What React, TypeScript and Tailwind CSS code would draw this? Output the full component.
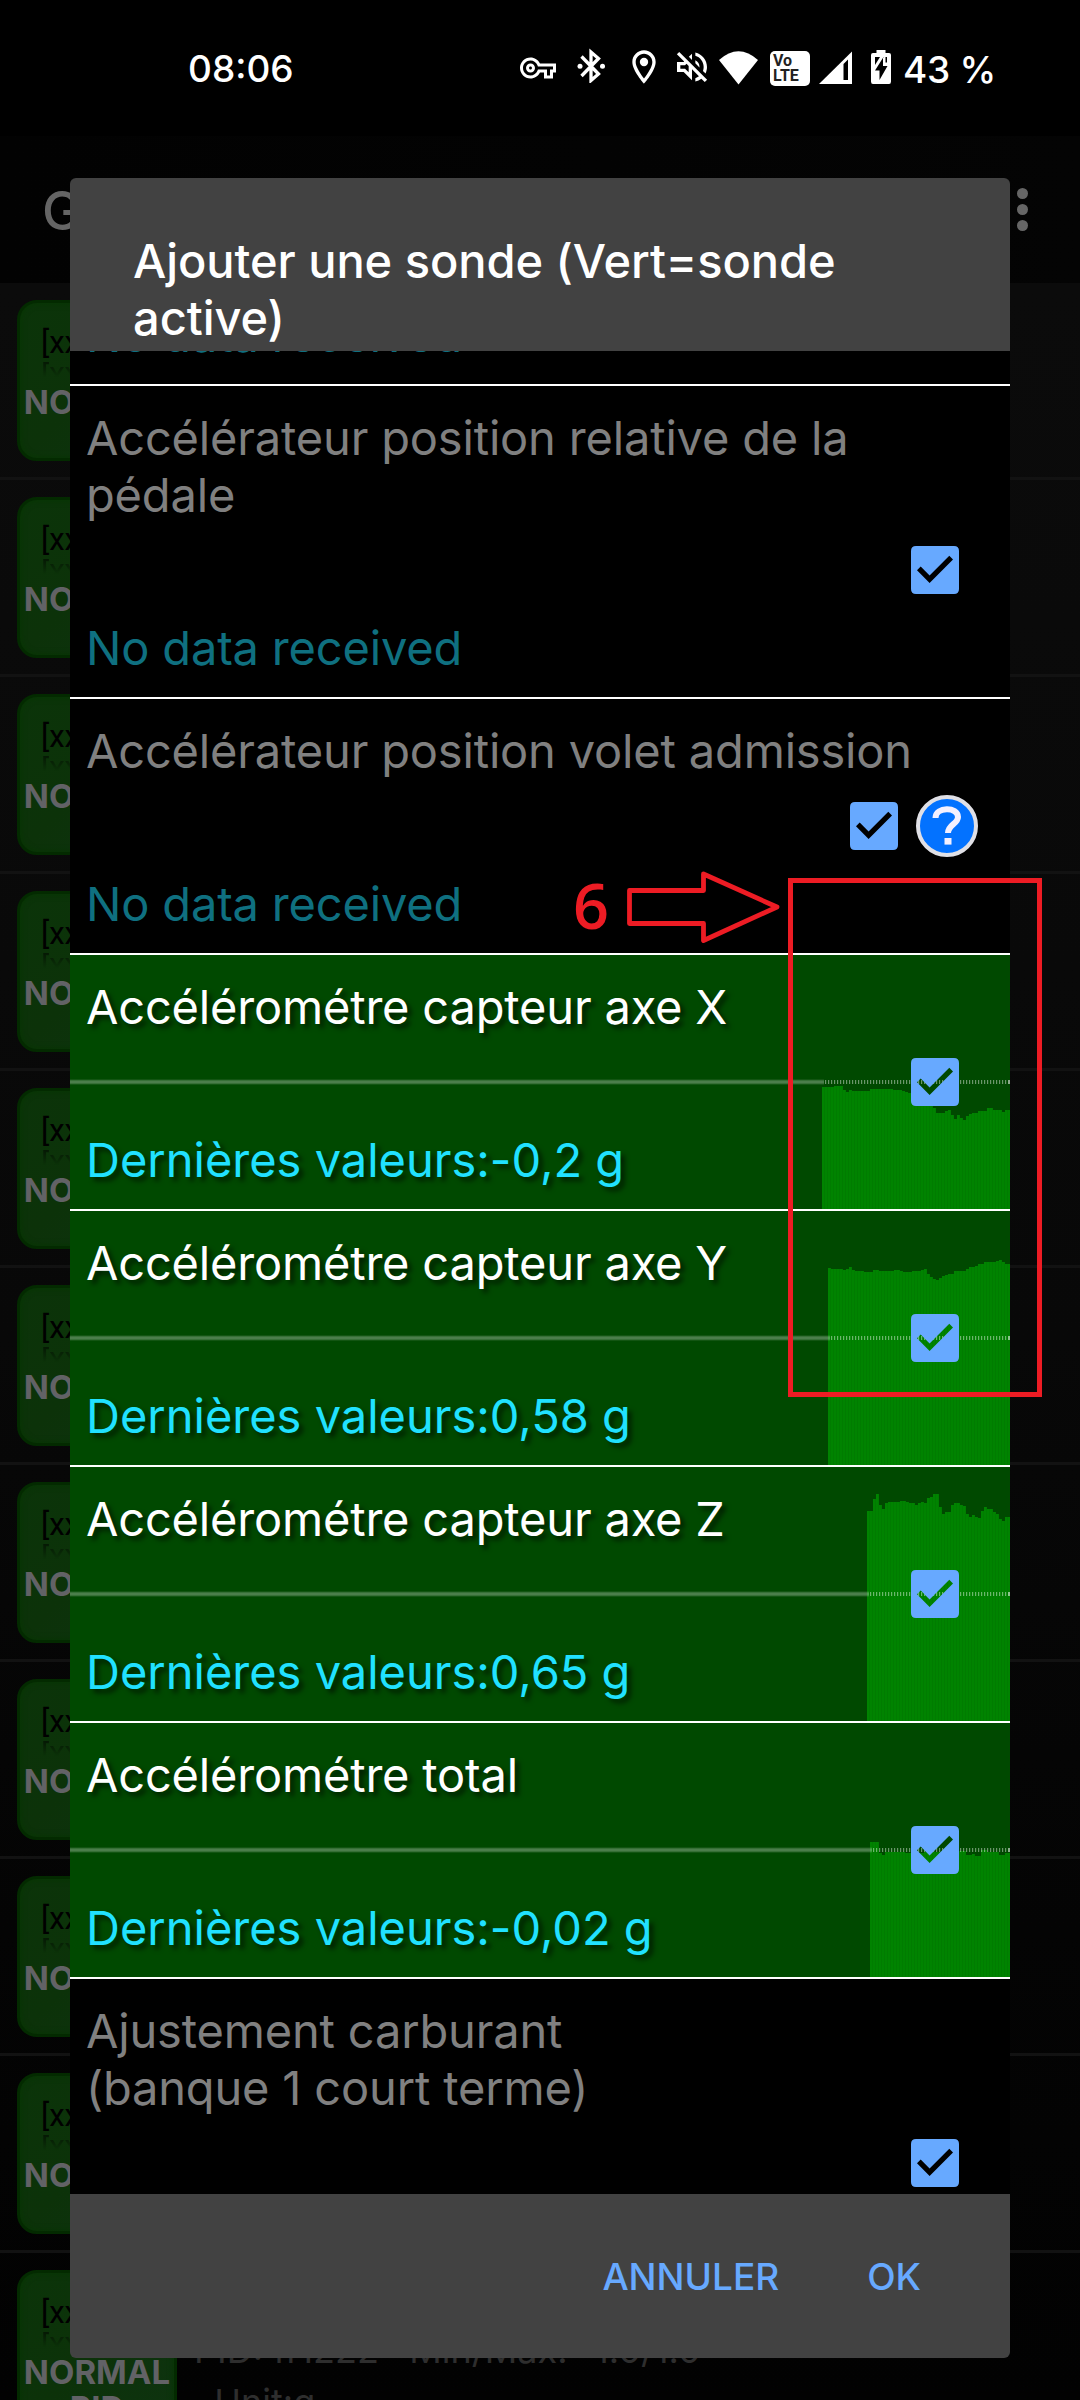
import React from "react";
import { MdOutlineLocationOn, MdOutlineVolumeOff, MdOutlineVpnKey } from "react-icons/md";

type Step = [number, number];

const axisX: Step[] = [
  [752, 132], [764, 131], [773, 134.5], [776, 137], [779, 134.5], [782, 136], [800, 133.5], [823, 134.5],
  [832, 136], [835, 137], [838, 138], [845, 141], [854, 146], [863, 152.5], [866, 157.5], [875, 156],
  [878, 154.5], [881, 160], [884, 164], [887, 160], [890, 163], [893, 165], [896, 161], [899, 159],
  [902, 158], [908, 156], [917, 153], [923, 154.5], [932, 157], [935, 155],
];
const axisY: Step[] = [
  [758, 56.7], [761, 57.7], [773, 58.7], [776, 57.7], [779, 56.3], [782, 58.7], [785, 60], [794, 61.3],
  [803, 59], [809, 60.3], [824, 59], [830, 60.3], [833, 61.3], [842, 60.3], [851, 58.7], [854, 57.7],
  [857, 63.3], [860, 66.3], [863, 67.7], [866, 69.3], [869, 67], [872, 65.3], [875, 64.3], [878, 62.7],
  [881, 63.3], [884, 60.3], [896, 57.7], [899, 56.3], [905, 54.7], [908, 52.7], [914, 51.3], [926, 50.3],
  [929, 48.7], [932, 51.3], [935, 52.7],
];
const axisZ: Step[] = [
  [797, 44], [803, 32], [806, 27.3], [809, 37.7], [812, 42.3], [815, 36.3], [818, 35], [830, 33.7],
  [836, 35], [839, 36.3], [845, 37.7], [848, 36.3], [851, 35], [854, 36.3], [857, 31.3], [860, 30],
  [863, 27.3], [869, 40.3], [872, 46.7], [875, 45.3], [881, 37.7], [884, 36.3], [890, 37.7], [893, 39.3],
  [896, 46.7], [899, 49.7], [902, 48.3], [905, 49.7], [908, 51.3], [911, 44], [914, 40.3], [917, 42.3],
  [923, 44.7], [926, 46.7], [929, 52], [932, 54.3], [935, 49.7],
];
const total: Step[] = [
  [800, 119.3], [809, 129.7], [812, 132.3], [815, 129.3], [835, 130], [854, 128.5], [889, 128.3],
  [896, 132.3], [902, 131], [905, 133], [911, 127], [917, 128.7], [929, 131.7], [935, 129.7],
];

function stepPath(steps: Step[]) {
  let d = `M${steps[0][0]} 254`;
  steps.forEach(([, y], i) => {
    d += `V${y}H${i + 1 < steps.length ? steps[i + 1][0] : 940}`;
  });
  return d + "V254Z";
}

function History({ steps, id }: { steps: Step[]; id: string }) {
  const start = steps[0][0];
  return (
    <svg className="absolute inset-0 h-full w-full" viewBox="0 0 940 254">
      <defs>
        <pattern id={id} x={start} y="0" width="3" height="254" patternUnits="userSpaceOnUse">
          <rect width="3" height="254" fill="#008300" />
          <rect x="2" width="1" height="254" fill="#007c00" />
        </pattern>
      </defs>
      <path d={stepPath(steps)} fill={`url(#${id})`} shapeRendering="crispEdges" />
      <path d={`M0 127H${start + 2}`} stroke="#fff" strokeOpacity=".14" strokeWidth="5" />
      <path d={`M0 127H${start + 2}`} stroke="#fff" strokeOpacity=".18" strokeWidth="3" />
      <path d={`M${start + 3} 127H938`} stroke="#fff" strokeOpacity=".42" strokeWidth="4" strokeDasharray="1.2 1.8" />
      <path d="M938 127H940" stroke="#fff" strokeOpacity=".55" strokeWidth="4" />
    </svg>
  );
}

function Checkbox() {
  return (
    <svg className="h-12 w-12 shrink-0" viewBox="0 0 48 48">
      <path
        fillRule="evenodd"
        fill="#67a9ff"
        d="M5 0H43Q48 0 48 5V43Q48 48 43 48H5Q0 48 0 43V5Q0 0 5 0ZM18.6 37L42 13.4L38.3 9.7L18.6 29.4L9.7 20.5L6 24.2Z"
      />
    </svg>
  );
}

function Help() {
  return (
    <div className="flex h-[62px] w-[62px] items-center justify-center rounded-full border-4 border-[#e0e0e6] bg-[#0372ff]">
      <svg className="h-[42px] w-[32px]" viewBox="0 0 32 42" fill="none" stroke="#f4f0ff" strokeWidth="6">
        <path d="M4.5 13C4.5 1.500 27 1.500 27 12C27 19 17 19.500 17 28" />
        <path d="M13.500 36.300H20.500" strokeWidth="6.600" />
      </svg>
    </div>
  );
}

interface RowProps {
  title: React.ReactNode;
  value?: string;
  help?: boolean;
  steps?: Step[];
  id?: string;
}

function ProbeRow({ title, value, help, steps, id = "" }: RowProps) {
  const active = Boolean(steps);
  return (
    <div
      className={
        active
          ? "relative shrink-0 border-b-2 border-white bg-[#004900] pt-[23px] pb-[21px] [text-shadow:4px_4px_5px_rgba(0,0,0,0.6)]"
          : "relative shrink-0 border-b-2 border-white bg-black pt-[23px] pb-[21px]"
      }
    >
      {steps && <History steps={steps} id={id} />}
      <div className={active ? "relative pl-4 tracking-[-0.18px] text-white" : "relative pl-4 tracking-[-0.17px] text-[#808080]"}>
        {title}
      </div>
      <div
        className={
          help
            ? "relative flex h-24 items-start justify-end gap-[18px] pt-[23px] pr-[32px]"
            : "relative flex h-24 items-start justify-end pt-[23px] pr-[51px]"
        }
      >
        <Checkbox />
        {help && (
          <div className="-mt-[7px]">
            <Help />
          </div>
        )}
      </div>
      {value ? (
        <div className="relative pl-4 text-[#21e1ff]">{value}</div>
      ) : (
        <div className="relative pl-4 tracking-[-0.17px] text-[#0f7080]">No data received</div>
      )}
    </div>
  );
}

function PidButton() {
  return (
    <div className="flex h-[197px] shrink-0 items-start border-b-[3px] border-[#121212] pt-[17px] pl-[17px]">
      <div className="h-[161px] w-[160px] overflow-hidden rounded-[20px] border-[3px] border-[#032a00] bg-linear-to-br from-[#0b3409] via-[#0c3209] to-[#0e3310] pt-[21px] shadow-[inset_0_0_6px_#063700]">
        <div className="pl-[21px] font-[Roboto] text-[31px] leading-[38px] text-black">[xxx]</div>
        <div className="-mt-px h-[16px] overflow-hidden pl-[21px] font-[Roboto] text-[31px] leading-[38px] text-black opacity-55 [mask-image:linear-gradient(to_bottom,black,transparent)]">
          <div className="-mt-[3px] -scale-y-100">[xxx]</div>
        </div>
        <div className="mt-[7px] text-center text-[33px] leading-[36px] font-bold text-[#626266]">
          NORMAL
          <br />
          PID
        </div>
      </div>
    </div>
  );
}

function StatusBar() {
  return (
    <div className="flex h-[136px] items-start bg-black pt-[47px] text-[37px] leading-[42px] font-medium text-white">
      <div className="mt-px ml-[188px] w-[332px] shrink-0">08:06</div>
      <MdOutlineVpnKey className="mt-[3px] h-[36px] w-[36px] shrink-0" />
      <svg className="ml-[20px] h-[36px] w-[30px] shrink-0" viewBox="0 0 30 36" fill="none" stroke="white" strokeWidth="3.300">
        <path d="M5.500 9.500L22.500 27L15 33.500V5L22.500 11.500L5.500 29" />
        <circle cx="4" cy="19.300" r="2.500" fill="white" stroke="none" />
        <circle cx="26.500" cy="19.300" r="2.500" fill="white" stroke="none" />
      </svg>
      <MdOutlineLocationOn className="ml-[18px] h-10 w-10 shrink-0" />
      <MdOutlineVolumeOff className="ml-[8px] h-10 w-10 shrink-0" />
      <svg className="ml-[7px] h-[42px] w-[39px] shrink-0" viewBox="0 0 39 42" fill="white">
        <path d="M0 13Q19.500 -4.500 39 13L19.500 37.500Z" />
      </svg>
      <div className="mt-[3.500px] ml-[12px] h-[35px] w-[40px] shrink-0 rounded-[5px] bg-white pt-[2px] pl-[3px] font-[Roboto] text-[16px] leading-[15px] font-bold text-[#222]">
        Vo
        <br />
        LTE
      </div>
      <svg className="ml-[9px] h-[42px] w-[34px] shrink-0" viewBox="0 0 34 42">
        <path d="M0 37L33 4.500V37Z" fill="white" />
        <path d="M24.500 17L29 12.500V33H24.500Z" fill="black" />
      </svg>
      <svg className="ml-[18px] h-[42px] w-[20px] shrink-0" viewBox="0 0 20 42">
        <path d="M5.500 3H14.500V6H18Q20 6 20 8V34.500Q20 37 18 37H2Q0 37 0 34.500V8Q0 6 2 6H5.500Z" fill="white" />
        <path d="M12.500 10L4 23.500H8.500V33L16.500 19H12V10Z" fill="black" />
        <path d="M4 10H9L4 18ZM14.500 10H16V15.500H14.500Z" fill="black" />
      </svg>
      <div className="mt-[2px] ml-[12px] tracking-[-0.300px] whitespace-nowrap">43 %</div>
    </div>
  );
}

function Dialog() {
  return (
    <div className="absolute top-[178px] left-[70px] flex h-[2180px] w-[940px] flex-col overflow-hidden rounded-[6px] bg-[#424242] text-[47px] leading-[57px]">
      <div className="h-[173px] shrink-0 pt-[54px] pl-[63px] font-medium tracking-[-0.060px] text-white">
        Ajouter une sonde (Vert=sonde
        <br />
        active)
      </div>
      <div className="flex h-[1843px] shrink-0 flex-col overflow-hidden bg-black">
        <div className="flex h-[35px] shrink-0 flex-col justify-end overflow-hidden border-b-2 border-white pb-[21px] pl-4 tracking-[-0.17px] text-[#0f7080]">
          <div className="-mt-[60px]">No data received</div>
        </div>
        <ProbeRow title={<>Accélérateur position relative de la<br />pédale</>} />
        <ProbeRow title="Accélérateur position volet admission" help />
        <ProbeRow title="Accélérométre capteur axe X" value="Dernières valeurs:-0,2 g" steps={axisX} id="bars-x" />
        <ProbeRow title="Accélérométre capteur axe Y" value="Dernières valeurs:0,58 g" steps={axisY} id="bars-y" />
        <ProbeRow title="Accélérométre capteur axe Z" value="Dernières valeurs:0,65 g" steps={axisZ} id="bars-z" />
        <ProbeRow title="Accélérométre total" value="Dernières valeurs:-0,02 g" steps={total} id="bars-t" />
        <ProbeRow title={<>Ajustement carburant<br />(banque 1 court terme)</>} />
      </div>
      <div className="flex flex-1 items-start justify-end gap-[88px] pt-[61px] pr-[89px] text-[37px] leading-[44px] font-medium text-[#67a9ff]">
        <span>ANNULER</span>
        <span>OK</span>
      </div>
    </div>
  );
}

function Annotation() {
  return (
    <>
      <div className="absolute top-[862px] left-[573px] font-['Open_Sans'] text-[63px] leading-[86px] font-semibold text-[#ed1c24]">6</div>
      <svg className="absolute top-[868px] left-[624px] h-[78px] w-[160px]" viewBox="0 0 160 78">
        <path d="M5.500 22.500H79.500V6L153 39L79.500 72.500V55.500H5.500Z" fill="none" stroke="#ed1c24" strokeWidth="4.800" strokeLinejoin="round" />
      </svg>
      <div className="absolute top-[878px] left-[788px] h-[519px] w-[254px] border-[5px] border-[#ed1c24]" />
    </>
  );
}

export default function App() {
  return (
    <div className="relative h-[2400px] w-[1080px] overflow-hidden bg-black font-[Inter,sans-serif]">
      <StatusBar />
      <div className="flex h-[147px] items-start justify-between bg-linear-to-r from-[#020202] to-[#040404] pt-[43px] pr-[52px] pl-[42px]">
        <span className="text-[53px] leading-[64px] font-medium text-[#656565]">G</span>
        <div className="flex flex-col gap-[5px] pt-[9px]">
          <i className="h-[11px] w-[11px] rounded-full bg-[#666]" />
          <i className="h-[11px] w-[11px] rounded-full bg-[#666]" />
          <i className="h-[11px] w-[11px] rounded-full bg-[#666]" />
        </div>
      </div>
      <div className="relative flex h-[2117px] flex-col overflow-hidden bg-linear-to-b from-[#0b0b0b] via-[#080808] to-[#020202]">
        {Array.from({ length: 11 }, (_, i) => (
          <PidButton key={i} />
        ))}
        <div className="absolute top-[2041px] left-[194px] text-[36px] leading-[52px] whitespace-pre text-[#2e2e2e]">
          {"PID: ff1222   Min/Max: -1.0/1.0\n  Unit:g"}
        </div>
      </div>
      <Dialog />
      <Annotation />
    </div>
  );
}
